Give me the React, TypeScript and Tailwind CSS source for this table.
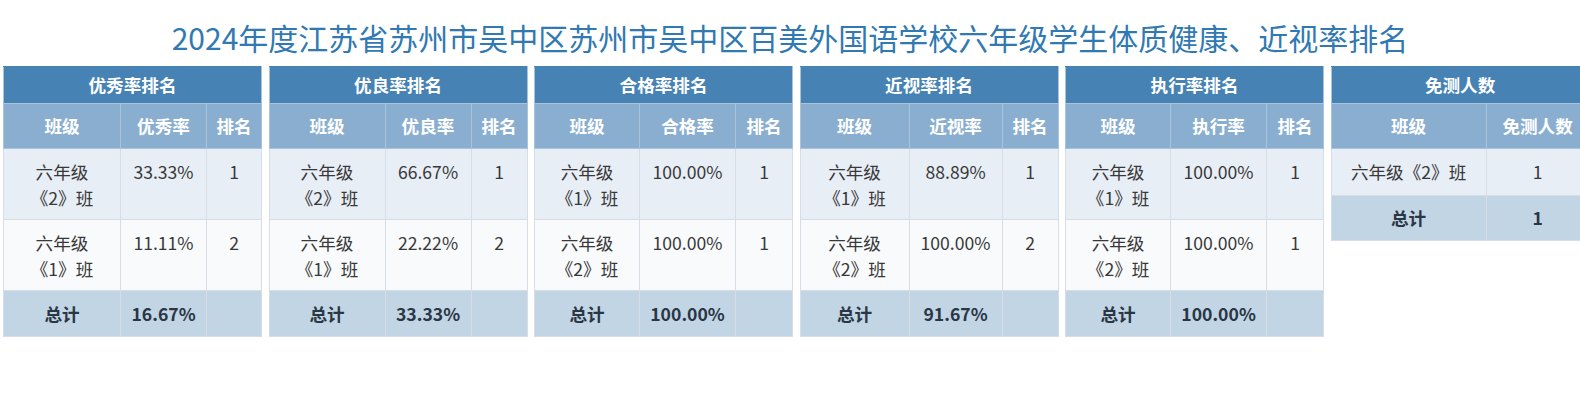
import React from 'react';

interface Row {
  grade: string;
  cls: string;
  value: string;
  rank?: string;
}

interface RankTable {
  title: string;
  valueLabel: string;
  widths: number[];
  rows: Row[];
  total: string;
}

const tables: RankTable[] = [
  {
    title: '优秀率排名',
    valueLabel: '优秀率',
    widths: [117, 86, 55],
    rows: [
      { grade: '六年级', cls: '《2》班', value: '33.33%', rank: '1' },
      { grade: '六年级', cls: '《1》班', value: '11.11%', rank: '2' },
    ],
    total: '16.67%',
  },
  {
    title: '优良率排名',
    valueLabel: '优良率',
    widths: [116, 86, 56],
    rows: [
      { grade: '六年级', cls: '《2》班', value: '66.67%', rank: '1' },
      { grade: '六年级', cls: '《1》班', value: '22.22%', rank: '2' },
    ],
    total: '33.33%',
  },
  {
    title: '合格率排名',
    valueLabel: '合格率',
    widths: [105, 96, 57],
    rows: [
      { grade: '六年级', cls: '《1》班', value: '100.00%', rank: '1' },
      { grade: '六年级', cls: '《2》班', value: '100.00%', rank: '1' },
    ],
    total: '100.00%',
  },
  {
    title: '近视率排名',
    valueLabel: '近视率',
    widths: [109, 93, 56],
    rows: [
      { grade: '六年级', cls: '《1》班', value: '88.89%', rank: '1' },
      { grade: '六年级', cls: '《2》班', value: '100.00%', rank: '2' },
    ],
    total: '91.67%',
  },
  {
    title: '执行率排名',
    valueLabel: '执行率',
    widths: [105, 96, 57],
    rows: [
      { grade: '六年级', cls: '《1》班', value: '100.00%', rank: '1' },
      { grade: '六年级', cls: '《2》班', value: '100.00%', rank: '1' },
    ],
    total: '100.00%',
  },
];

const cellBorder = 'border border-[#d6dde5]';
const headBorder = 'border border-[#a9c3da]';

function ClassName({ row }: { row: Row }) {
  return (
    <>
      <span className="whitespace-nowrap">{row.grade}</span>
      <span className="whitespace-nowrap">{row.cls}</span>
    </>
  );
}

function RankCard({ t }: { t: RankTable }) {
  return (
    <table className="w-[258px] shrink-0 table-fixed border-collapse border border-[#d9d9d9] self-start">
      <colgroup>
        {t.widths.map((w, i) => (
          <col key={i} style={{ width: w }} />
        ))}
      </colgroup>
      <thead>
        <tr className="h-[37px] bg-[#4682b4] text-white">
          <th colSpan={3} className={`${headBorder} border-t-[#4682b4] font-bold`}>
            {t.title}
          </th>
        </tr>
        <tr className="h-[45px] bg-[#8aaed0] text-white">
          <th className={`${headBorder} font-bold`}>班级</th>
          <th className={`${headBorder} font-bold`}>{t.valueLabel}</th>
          <th className={`${headBorder} font-bold`}>排名</th>
        </tr>
      </thead>
      <tbody className="text-[#383838]">
        {t.rows.map((r, i) => (
          <tr key={i} className={`h-[71px] ${i % 2 === 0 ? 'bg-[#e8eef6]' : 'bg-[#f8fafc]'}`}>
            <td className={`${cellBorder} align-top px-3 pt-[10px]`}>
              <ClassName row={r} />
            </td>
            <td className={`${cellBorder} align-top px-1 pt-[10px]`}>{r.value}</td>
            <td className={`${cellBorder} align-top px-1 pt-[10px]`}>{r.rank}</td>
          </tr>
        ))}
        <tr className="h-[46px] bg-[#c1d5e5] font-bold text-[#2a3644]">
          <td className={cellBorder}>总计</td>
          <td className={cellBorder}>{t.total}</td>
          <td className={cellBorder}></td>
        </tr>
      </tbody>
    </table>
  );
}

function ExemptCard() {
  return (
    <table className="w-[258px] shrink-0 table-fixed border-collapse border border-[#d9d9d9] self-start">
      <colgroup>
        <col style={{ width: 155 }} />
        <col style={{ width: 103 }} />
      </colgroup>
      <thead>
        <tr className="h-[37px] bg-[#4682b4] text-white">
          <th colSpan={2} className={`${headBorder} border-t-[#4682b4] font-bold`}>
            免测人数
          </th>
        </tr>
        <tr className="h-[45px] bg-[#8aaed0] text-white">
          <th className={`${headBorder} font-bold`}>班级</th>
          <th className={`${headBorder} font-bold`}>免测人数</th>
        </tr>
      </thead>
      <tbody className="text-[#383838]">
        <tr className="h-[47px] bg-[#e8eef6]">
          <td className={`${cellBorder} align-top px-2 pt-[10px]`}>
            <span className="whitespace-nowrap">六年级</span>
            <span className="whitespace-nowrap">《2》班</span>
          </td>
          <td className={`${cellBorder} align-top px-1 pt-[10px]`}>1</td>
        </tr>
        <tr className="h-[45px] bg-[#c1d5e5] font-bold text-[#2a3644]">
          <td className={cellBorder}>总计</td>
          <td className={cellBorder}>1</td>
        </tr>
      </tbody>
    </table>
  );
}

export default function App() {
  return (
    <div
      className="w-[1580px] h-[394px] overflow-hidden bg-white"
      style={{ fontFamily: '"Noto Sans CJK SC", "Noto Sans", sans-serif' }}
    >
      <h1 className="pt-[15px] pb-[7px] text-center text-[30px] leading-[44px] font-normal text-[#3079b2]">
        2024年度江苏省苏州市吴中区苏州市吴中区百美外国语学校六年级学生体质健康、近视率排名
      </h1>
      <div className="flex items-start gap-[6.5px] pl-[3px] text-center text-[17.6px] leading-[26px]">
        {tables.map((t) => (
          <RankCard key={t.title} t={t} />
        ))}
        <ExemptCard />
      </div>
    </div>
  );
}
